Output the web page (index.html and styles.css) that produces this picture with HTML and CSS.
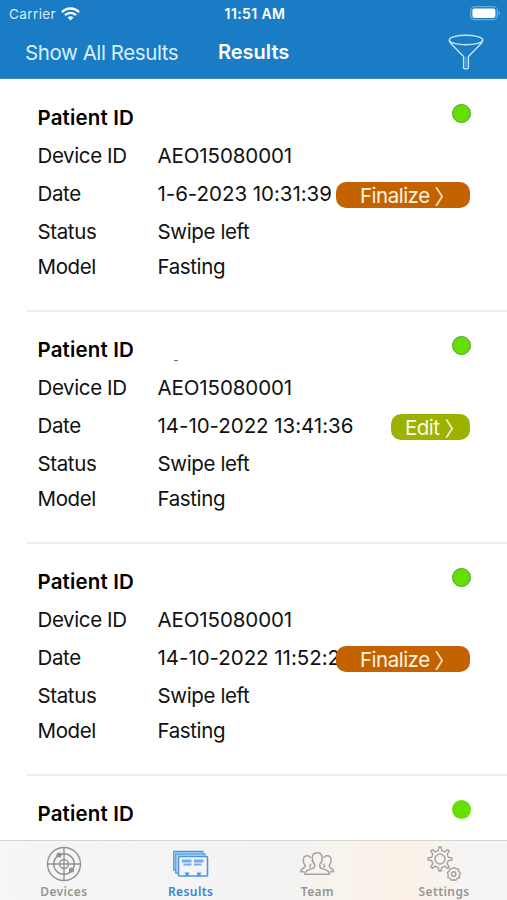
FILE: index.html
```html
<!DOCTYPE html>
<html lang="en">
<head>
  <meta charset="UTF-8">
  <meta name="viewport" content="width=device-width, initial-scale=1.0">
  <title>Results</title>
  <link rel="stylesheet" href="styles.css">
</head>
<body>
  <div class="app">
    <header class="header">
      <div class="status-bar">
        <span class="carrier">Carrier
          <svg class="wifi" width="19" height="14" viewBox="0 0 19 14" fill="none" stroke="#fff" stroke-width="2.3">
            <path d="M1 5.1C5.8.3 13.2.3 18 5.1"/>
            <path d="M4 8.2c3.2-3 7.8-3 11 0"/>
            <path d="M6.6 10.4c1.7-1.5 4.1-1.5 5.8 0L9.5 13.4z" fill="#fff" stroke="none"/>
          </svg>
        </span>
        <span class="time">11:51 AM</span>
        <svg class="battery" width="31" height="15" viewBox="0 0 31 15">
          <rect x=".7" y=".7" width="26.6" height="13" rx="3.8" fill="none" stroke="#67abdd" stroke-width="1.2"/>
          <rect x="2.4" y="2.4" width="23" height="9.6" rx="2" fill="#fff"/>
          <path d="M28.6 5v4.6c1.8-.7 1.8-3.9 0-4.6z" fill="#67abdd"/>
        </svg>
      </div>
      <div class="nav-bar">
        <a class="show-all">Show All Results</a>
        <h1 class="title">Results</h1>
        <svg class="filter" width="36" height="36" viewBox="0 0 36 36" fill="none" stroke="#c5e6fa" stroke-width="1.4">
          <ellipse cx="18" cy="6" rx="16.7" ry="4.8"/>
          <path d="M1.3 6c0 1.6.7 2.7 2 4L15.6 22.5v11c0 1.800 4.800 1.800 4.800 0v-11L32.700 10c1.300-1.300 2-2.400 2-4"/>
          <path d="M18 23v10" stroke-width=".6"/>
        </svg>
      </div>
    </header>

    <main class="results">
      <section class="result">
        <h2>Patient ID</h2>
        <span class="dot"></span>
        <span>Device ID</span><span class="device">AEO15080001</span>
        <span>Date</span><span class="date">1-6-2023 10:31:39</span>
        <span>Status</span><span>Swipe left</span>
        <span>Model</span><span>Fasting</span>
        <button class="action finalize">Finalize<i>〉</i></button>
      </section>
      <section class="result">
        <h2>Patient ID</h2>
        <span class="mark"></span>
        <span class="dot"></span>
        <span>Device ID</span><span class="device">AEO15080001</span>
        <span>Date</span><span class="date">14-10-2022 13:41:36</span>
        <span>Status</span><span>Swipe left</span>
        <span>Model</span><span>Fasting</span>
        <button class="action edit">Edit<i>〉</i></button>
      </section>
      <section class="result">
        <h2>Patient ID</h2>
        <span class="dot"></span>
        <span>Device ID</span><span class="device">AEO15080001</span>
        <span>Date</span><span class="date">14-10-2022 11:52:23</span>
        <span>Status</span><span>Swipe left</span>
        <span>Model</span><span>Fasting</span>
        <button class="action finalize">Finalize<i>〉</i></button>
      </section>
      <section class="result">
        <h2>Patient ID</h2>
        <span class="dot plain"></span>
      </section>
    </main>

    <nav class="tab-bar">
      <a class="tab">
        <svg width="36" height="36" viewBox="0 0 36 36" fill="none" stroke="#929292" stroke-width="1.4">
          <circle cx="18" cy="18" r="16.5"/>
          <circle cx="18" cy="18" r="10.3"/>
          <circle cx="18" cy="18" r="4.5"/>
          <path d="M18 1.500v33M1.500 18h33"/>
          <circle cx="13" cy="9" r="1.9" fill="#929292"/>
          <circle cx="25.5" cy="24" r="1.9" fill="#929292"/>
        </svg>
        <span>Devices</span>
      </a>
      <a class="tab active">
        <svg width="36" height="36" viewBox="0 0 36 36" fill="none" stroke="#4796e5" stroke-width="1.4">
          <path d="M2.500 24H.8V5.500h29v2"/>
          <path d="M4.800 27h-2V8h29v2"/>
          <rect x="5.500" y="10.500" width="29" height="19.500" rx="1" stroke-width="1.600"/>
          <path d="M1.800 6.500v17M4 9V26M1.500 6.700h28M4 9.200h28" stroke="#8fbeee" stroke-width="1"/>
          <path d="M9 13.500h9.500v3H9zM21 13.500h9.500v3H21zM10.500 17.500h8v2h-8zM21 17.500h7.500v2H21z" fill="#70ace9" stroke="none"/>
          <path d="M11.500 26.500h5l-1.200 2 1.200 1.500h-5l1.200-1.500zM23.500 26.500h5l-1.200 2 1.200 1.500h-5l1.200-1.500z" fill="#4796e5" stroke="none"/>
        </svg>
        <span>Results</span>
      </a>
      <a class="tab">
        <svg width="36" height="36" viewBox="0 0 36 36" fill="none" stroke="#a5a4a2" stroke-width="1.5" stroke-linejoin="round" stroke-linecap="round">
          <path d="M15.700 18.500c-2-1.900-2.600-4.500-2.400-7 .2-2.900 2-4.800 4.900-4.800s4.700 1.900 4.900 4.800c.2 2.500-.4 5.100-2.400 7-.4 2.500.3 3.500 3 4.400 4.200 1.300 6.800 2.100 7 5.400H5.700c.2-3.300 2.800-4.100 7-5.400 2.700-.9 3.400-1.900 3-4.400z"/>
          <path d="M11.500 11.200c-.8-1-1.900-1.500-3.200-1.500-2.400 0-3.900 1.600-4 4-.1 2.200.4 4.100 1.900 5.500.2 1.700-.3 2.300-1.800 3-1.700.8-2.700 1.400-2.700 3.500h3M11.900 18.300c-1.100 1.100-1.300 2-.7 3"/>
          <path d="M24.900 11.200c.8-1 1.900-1.500 3.200-1.500 2.400 0 3.900 1.600 4 4 .1 2.200-.4 4.100-1.900 5.500-.2 1.700.3 2.300 1.800 3 1.700.8 2.700 1.400 2.700 3.500h-3M24.500 18.300c1.100 1.100 1.300 2 .7 3"/>
        </svg>
        <span>Team</span>
      </a>
      <a class="tab">
        <svg width="36" height="36" viewBox="0 0 36 36" fill="none" stroke="#a5a19d" stroke-width="1.4" stroke-linejoin="round">
          <path d="M12.300 4.600 13 1h2l.7 3.600 2.900 1.200 3.100-2.100 1.500 1.500-2.100 3.100 1.200 2.900 3.600.7v2.200l-3.600.7-1.200 2.900 2.100 3.100-1.500 1.500-3.100-2.100-2.900 1.200-.7 3.600h-2l-.7-3.600-2.900-1.200-3.100 2.100-1.500-1.500 2.100-3.100-1.200-2.900-3.600-.7v-2.200l3.600-.7 1.200-2.900-2.100-3.100 1.500-1.500 3.100 2.100z"/>
          <circle cx="14" cy="13" r="5"/>
          <path d="m28 21.700 2 1 2.300.2.500 2.200 1.500 1.900-.9 2.100.1 2.400-2.200.9-1.500 1.900-2.300-.6-2.400.5-1.300-2-2-1.200.4-2.300-.8-2.200 1.800-1.500.8-2.300 2.300-.1z"/>
          <circle cx="27.700" cy="28" r="2.200"/>
        </svg>
        <span>Settings</span>
      </a>
    </nav>
  </div>
</body>
</html>
```
FILE: styles.css
```css
* {
  box-sizing: border-box;
}

body {
  margin: 0;
  font-family: Inter, "Noto Sans CJK SC", sans-serif;
  color: #111;
}

.app {
  display: flex;
  flex-direction: column;
  width: 507px;
  height: 900px;
  overflow: hidden;
  background: #fff;
}

.header {
  flex: none;
  height: 79px;
  background: #197cc5;
  color: #fff;
  border-bottom: 1px solid #3e8fbf;
}

.status-bar {
  display: grid;
  grid-template-columns: 1fr auto 1fr;
  align-items: center;
  height: 27px;
  padding: 0 6px 0 9px;
  font-size: 13.5px;
}

.carrier {
  display: flex;
  align-items: center;
  gap: 5px;
  color: #d8edfa;
  letter-spacing: 0.4px;
}

.time {
  font-weight: 600;
  font-size: 14px;
  letter-spacing: 0.4px;
}

.battery {
  justify-self: end;
}

.nav-bar {
  display: flex;
  align-items: center;
  height: 50px;
  padding: 0 23px 0 25px;
}

.show-all {
  width: 193px;
  font-size: 20.5px;
  letter-spacing: -0.42px;
  color: #d9effc;
  white-space: nowrap;
}

.title {
  margin: 0;
  font-size: 20px;
  font-weight: 600;
}

.filter {
  margin-left: auto;
}

.results {
  flex: 1;
  min-height: 0;
  padding-top: 1px;
  overflow: hidden;
}

.result {
  position: relative;
  display: grid;
  grid-template-columns: 120px 1fr;
  grid-template-rows: 38px 38px 38px 38px 33px;
  align-content: start;
  align-items: center;
  height: 232px;
  margin-left: 27px;
  padding: 18px 0 0 10.5px;
  border-bottom: 2px solid #ececec;
  font-size: 20.5px;
  letter-spacing: -0.38px;
  white-space: nowrap;
}

.result h2 {
  grid-column: 1 / 3;
  margin: 0;
  font-size: 20.5px;
  font-weight: 600;
  letter-spacing: 0.15px;
  color: #000;
}

.result .device {
  letter-spacing: -0.1px;
}

.result .date {
  letter-spacing: -0.04px;
}

.dot {
  position: absolute;
  top: 24px;
  right: 36.5px;
  width: 19px;
  height: 19px;
  border: 1.5px solid #4c9e2e;
  border-radius: 50%;
  background: #66df00;
}

.dot.plain {
  border: none;
}

.mark {
  position: absolute;
  top: 48px;
  left: 147px;
  width: 4px;
  height: 1px;
  background: #777;
}

.action {
  position: absolute;
  top: 102px;
  right: 37px;
  display: flex;
  align-items: center;
  height: 26px;
  padding: 0;
  border: none;
  border-radius: 10px;
  color: #fff3e2;
  font-family: inherit;
  font-size: 20.5px;
  letter-spacing: -0.5px;
}

.action i {
  margin-left: 5px;
  font-family: "Noto Sans CJK SC", sans-serif;
  font-style: normal;
}

.finalize {
  width: 134px;
  padding-left: 24px;
  background: #c46200;
}

.edit {
  width: 79px;
  padding-left: 14px;
  background: #9bb300;
}

.tab-bar {
  flex: none;
  display: grid;
  grid-template-columns: repeat(4, 1fr);
  height: 60px;
  border-top: 1px solid #d5d5d5;
  background: linear-gradient(90deg, #f5f6f5 0%, #f3f3f3 55%, #f8f3ed 68%, #faf0e7 80%, #f6f5f3 92%, #f5f5f5 100%);
}

.tab {
  display: flex;
  flex-direction: column;
  align-items: center;
  padding: 5px 0 0 1px;
  font-family: "Noto Sans", sans-serif;
  font-size: 12px;
  font-weight: 600;
  line-height: 19px;
  letter-spacing: 0.4px;
  color: #979593;
}

.tab.active {
  color: #3587d7;
}
```
